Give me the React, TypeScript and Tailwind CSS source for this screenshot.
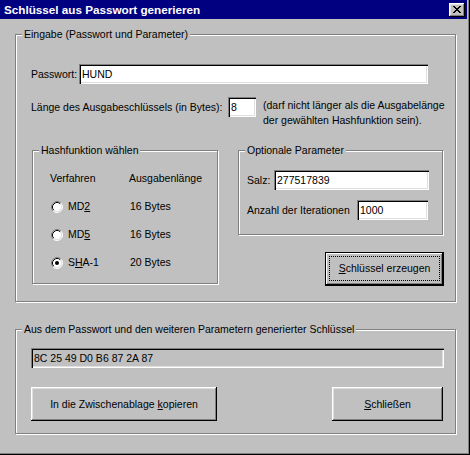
import React from 'react';

// Win98 bevels
const raised =
  'shadow-[inset_-1px_-1px_0_#000,inset_1px_1px_0_#fff,inset_-2px_-2px_0_#808080,inset_2px_2px_0_#dfdfdf]';
const sunken =
  'shadow-[inset_1px_1px_0_#808080,inset_2px_2px_0_#000,inset_-1px_-1px_0_#fff,inset_-2px_-2px_0_#dfdfdf]';

function GroupBox({
  label,
  className,
  children,
}: {
  label: string;
  className: string;
  children?: React.ReactNode;
}) {
  return (
    <div
      className={
        'relative border border-[#808080] shadow-[inset_1px_1px_0_#fff,1px_1px_0_#fff] ' + className
      }
    >
      <span className="absolute top-[-8px] left-[6px] px-[2px] bg-[#c0c0c0] whitespace-nowrap">
        {label}
      </span>
      {children}
    </div>
  );
}

function Field({ value, className }: { value: string; className: string }) {
  return (
    <input
      readOnly
      value={value}
      className={'h-[20px] pl-[3px] pr-[2px] text-black outline-none ' + sunken + ' ' + className}
    />
  );
}

function Radio({ checked }: { checked?: boolean }) {
  return (
    <svg width="12" height="12" viewBox="0 0 12 12" className="shrink-0">
      <circle cx="6" cy="6" r="5" fill="#fff" />
      <path d="M2.11 9.89A5.5 5.5 0 0 1 9.89 2.11" stroke="#808080" fill="none" />
      <path d="M9.89 2.11A5.5 5.5 0 0 1 2.11 9.89" stroke="#fff" fill="none" />
      <path d="M2.82 9.18A4.5 4.5 0 0 1 9.18 2.82" stroke="#000" fill="none" />
      <path d="M9.18 2.82A4.5 4.5 0 0 1 2.82 9.18" stroke="#dfdfdf" fill="none" />
      {checked && <circle cx="6" cy="6" r="2" fill="#000" />}
    </svg>
  );
}

function HashRow({ name, bytes, checked }: { name: React.ReactNode; bytes: string; checked?: boolean }) {
  return (
    <div className="flex h-[28px]">
      <span className="w-[79px] h-[15px] flex items-center">
        <span className="ml-[1px] mr-[5px] flex">
          <Radio checked={checked} />
        </span>
        {name}
      </span>
      <span className="pl-[1px]">{bytes}</span>
    </div>
  );
}

export default function App() {
  return (
    <div className="w-[470px] h-[455px] bg-[#c0c0c0] pr-[3px] flex flex-col shadow-[inset_-1px_-1px_0_#000,inset_-2px_-2px_0_#808080] font-['Liberation_Sans',Arial,sans-serif] text-[10.5px] leading-[15px] text-black select-none">
      {/* Title bar */}
      <div className="h-[19px] shrink-0 bg-[#000080] flex items-center pl-[4px] pr-[2px]">
        <span className="text-white font-bold text-[11.7px]">Schlüssel aus Passwort generieren</span>
        <div className={'ml-auto w-[16px] h-[14px] bg-[#c0c0c0] flex items-center justify-center ' + raised}>
          <svg width="8" height="7" viewBox="0 0 8 7" shapeRendering="crispEdges">
            <path
              d="M0 0h2v1h-2z M6 0h2v1h-2z M1 1h2v1h-2z M5 1h2v1h-2z M2 2h4v1h-4z M3 3h2v1h-2z M2 4h4v1h-4z M1 5h2v1h-2z M5 5h2v1h-2z M0 6h2v1h-2z M6 6h2v1h-2z"
              fill="#000"
            />
          </svg>
        </div>
      </div>

      <div className="pl-[15px] pt-[15px]">
        {/* Input group */}
        <GroupBox label="Eingabe (Passwort und Parameter)" className="w-[441px] h-[268px] pl-[15px] pt-[29px]">
          <div className="flex items-center">
            <span className="w-[48px]">Passwort:</span>
            <Field value="HUND" className="w-[349px] bg-white" />
          </div>

          <div className="mt-[13px] flex items-start">
            <div className="flex items-center">
              <span className="w-[197px]">Länge des Ausgabeschlüssels (in Bytes):</span>
              <Field value="8" className="w-[28px] bg-white" />
            </div>
            <p className="ml-[7px] mt-[1px]">
              (darf nicht länger als die Ausgabelänge
              <br />
              der gewählten Hashfunktion sein).
            </p>
          </div>

          <div className="mt-[22px] flex items-start">
            <GroupBox label="Hashfunktion wählen" className="ml-[1px] w-[186px] h-[134px] pl-[17px] pt-[20px]">
              <div className="flex h-[28px]">
                <span className="w-[79px]">Verfahren</span>
                <span>Ausgabenlänge</span>
              </div>
              <HashRow name={<>MD<u>2</u></>} bytes="16 Bytes" />
              <HashRow name={<>MD<u>5</u></>} bytes="16 Bytes" />
              <HashRow name={<>S<u>H</u>A-1</>} bytes="20 Bytes" checked />
            </GroupBox>

            <div className="ml-[20px] w-[206px] flex flex-col">
              <GroupBox label="Optionale Parameter" className="w-[205px] h-[85px] pl-[8px] pt-[19px]">
                <div className="flex items-center">
                  <span className="w-[27px]">Salz:</span>
                  <Field value="277517839" className="w-[155px] bg-white" />
                </div>
                <div className="mt-[10px] flex items-center">
                  <span className="w-[110px]">Anzahl der Iterationen</span>
                  <Field value="1000" className="w-[71px] bg-white" />
                </div>
              </GroupBox>

              <button className="mt-[17px] ml-[87px] w-[119px] h-[34px] bg-[#c0c0c0] p-[4px] pb-[5px] flex shadow-[inset_0_0_0_1px_#000,inset_-2px_-2px_0_#000,inset_2px_2px_0_#fff,inset_-3px_-3px_0_#808080]">
                <span className="flex-1 flex items-center justify-center border border-dotted border-black">
                  <span>
                    <u>S</u>chlüssel erzeugen
                  </span>
                </span>
              </button>
            </div>
          </div>
        </GroupBox>

        {/* Output group */}
        <GroupBox
          label="Aus dem Passwort und den weiteren Parametern generierter Schlüssel"
          className="mt-[27px] w-[441px] h-[105px] pl-[15px] pt-[18px]"
        >
          <Field value="8C 25 49 D0 B6 87 2A 87" className="w-[413px] bg-[#c0c0c0]" />
          <div className="mt-[19px] w-[412px] flex justify-between">
            <button className={'w-[186px] h-[34px] bg-[#c0c0c0] flex items-center justify-center ' + raised}>
              <span>
                In die Zwischenablage <u>k</u>opieren
              </span>
            </button>
            <button className={'w-[111px] h-[34px] bg-[#c0c0c0] flex items-center justify-center ' + raised}>
              <span>
                <u>S</u>chließen
              </span>
            </button>
          </div>
        </GroupBox>
      </div>
    </div>
  );
}
